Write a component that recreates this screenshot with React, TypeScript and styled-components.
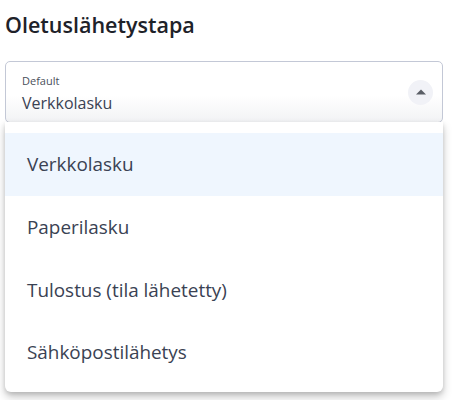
import React, { useState } from "react";
import styled, { createGlobalStyle } from "styled-components";

const Global = createGlobalStyle`
  html, body { margin: 0; padding: 0; background: #ffffff; }
  body { font-family: "Open Sans", "Noto Sans", sans-serif; -webkit-font-smoothing: antialiased; }
  * { box-sizing: border-box; }
`;

const Page = styled.div`
  width: 459px;
  height: 400px;
  padding: 11px 16px 0 5px;
  display: flex;
  flex-direction: column;
  overflow: hidden;
  position: relative;
`;

const Title = styled.h2`
  margin: 0 0 22px 0;
  font-size: 21.5px;
  font-weight: 600;
  line-height: 28px;
  color: #1e2229;
`;

const SelectWrap = styled.div`
  position: relative;
  width: 438px;
`;

const Field = styled.div`
  height: 62px;
  border: 1px solid #c3c8d6;
  border-radius: 5px;
  background: linear-gradient(to bottom, #ffffff 0%, #ffffff 55%, #f2f3f5 100%);
  display: flex;
  align-items: center;
  padding: 0 9px 0 16px;
`;

const FieldText = styled.div`
  flex: 1;
  display: flex;
  flex-direction: column;
  padding-top: 2px;
`;

const Label = styled.span`
  font-size: 11px;
  line-height: 15px;
  color: #4a4f5a;
`;

const Value = styled.span`
  font-size: 16px;
  line-height: 22px;
  margin-top: 4px;
  color: #3a4253;
`;

const ToggleButton = styled.button`
  width: 25px;
  height: 25px;
  border-radius: 50%;
  border: none;
  background: #f1f2f7;
  display: flex;
  align-items: center;
  justify-content: center;
  padding: 0;
  cursor: pointer;
`;

const Menu = styled.ul`
  position: absolute;
  left: 0;
  right: 0;
  top: 61px;
  margin: 0;
  list-style: none;
  padding: 11px 0 8px;
  background: #ffffff;
  border-radius: 0 0 6px 6px;
  box-shadow: 0 5px 10px rgba(0, 0, 0, 0.22), 0 2px 4px rgba(0, 0, 0, 0.12);
  z-index: 2;
`;

const Item = styled.li<{ $active?: boolean }>`
  height: 62.7px;
  display: flex;
  align-items: center;
  padding: 0 22px;
  font-size: 18.9px;
  color: #3a4253;
  background: ${(p) => (p.$active ? "#eff6fe" : "transparent")};
`;

const options = [
  "Verkkolasku",
  "Paperilasku",
  "Tulostus (tila lähetetty)",
  "Sähköpostilähetys",
];

export default function App() {
  const [selected] = useState(0);
  return (
    <>
      <Global />
      <Page>
        <Title>Oletuslähetystapa</Title>
        <SelectWrap>
          <Field>
            <FieldText>
              <Label>Default</Label>
              <Value>{options[selected]}</Value>
            </FieldText>
            <ToggleButton aria-label="toggle">
              <svg width="10" height="6" viewBox="0 0 10 6">
                <path d="M0 5.5 L5 0.5 L10 5.5 Z" fill="#5a5e66" />
              </svg>
            </ToggleButton>
          </Field>
          <Menu>
            {options.map((o, i) => (
              <Item key={o} $active={i === selected}>
                {o}
              </Item>
            ))}
          </Menu>
        </SelectWrap>
      </Page>
    </>
  );
}
